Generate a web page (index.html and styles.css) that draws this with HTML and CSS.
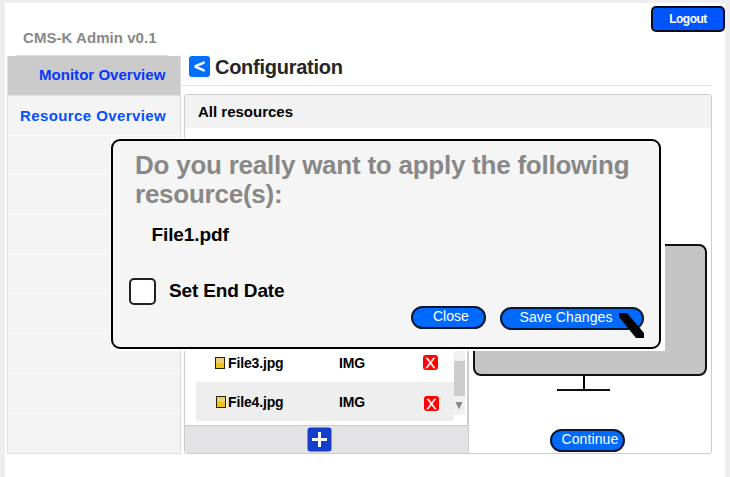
FILE: index.html
```
<!DOCTYPE html>
<html lang="en">
<head>
<meta charset="utf-8">
<title>CMS-K Admin</title>
<link rel="stylesheet" href="styles.css">
</head>
<body>
<div class="app">
  <aside class="sidebar">
    <div class="brand"><span>CMS-K Admin v0.1</span></div>
    <nav class="menu">
      <a class="item active"><span class="monitor-label">Monitor Overview</span></a>
      <a class="item"><span class="resource-label">Resource Overview</span></a>
      <div class="item"></div>
      <div class="item"></div>
      <div class="item"></div>
      <div class="item"></div>
      <div class="item"></div>
      <div class="item"></div>
      <div class="item"></div>
      <div class="item"></div>
    </nav>
  </aside>
  <main class="main">
    <header class="top"><button class="logout">Logout</button></header>
    <div class="heading">
      <svg class="back" viewBox="0 0 21 21"><rect width="21" height="21" rx="3" fill="#006fff"/><path d="M15.6 5v2.8L8.8 10.5l6.8 2.7V16L5.5 11.7V9.3z" fill="#fff"/></svg>
      <h1>Configuration</h1>
    </div>
    <section class="panel">
      <div class="panel-head"><span>All resources</span></div>
      <div class="panel-body">
        <div class="list">
          <div class="list-scroll">
            <div class="rows">
              <div class="row">
                <i class="file-icon"></i><span class="name">File3.jpg</span><span class="type">IMG</span><span class="delete">X</span>
              </div>
              <div class="row alt">
                <i class="file-icon"></i><span class="name">File4.jpg</span><span class="type">IMG</span><span class="delete">X</span>
              </div>
            </div>
            <div class="scrollbar">
              <div class="thumb"></div>
              <svg class="arrow" viewBox="0 0 10 9"><path d="M1.5 1h7L5 8.5z" fill="#888"/></svg>
            </div>
          </div>
          <div class="list-foot">
            <svg class="add" viewBox="0 0 25 25"><rect x=".5" y=".5" width="24" height="24" rx="3" fill="#123fca"/><path d="M12.5 5v15M5 12.5h15" stroke="#fff" stroke-width="3"/></svg>
          </div>
        </div>
        <div class="preview">
          <div class="screen"></div>
          <div class="stand"></div>
          <div class="base"></div>
          <button class="pill continue">Continue</button>
        </div>
      </div>
    </section>
  </main>
</div>
<div class="modal-frame">
  <div class="modal">
    <h2>Do you really want to apply the following<br><span>resource(s):</span></h2>
    <p class="resource"><span>File1.pdf</span></p>
    <label class="end-date"><i class="checkbox"></i><span>Set End Date</span></label>
    <div class="actions">
      <button class="pill close">Close</button>
      <button class="pill save">Save Changes</button>
    </div>
  </div>
</div>
<svg class="cursor" viewBox="0 0 25 25"><path d="M0 0h8l17 20v5h-8L0 4z"/></svg>
</body>
</html>
```
FILE: styles.css
```
* { box-sizing: border-box; }
body {
  margin: 0;
  height: 477px;
  overflow: hidden;
  padding: 3px 5px 0;
  background: #eee;
  font-family: "Liberation Sans", Arial, sans-serif;
  white-space: nowrap;
}
h1, h2, p { margin: 0; }
button { font-family: inherit; margin: 0; padding: 0; }
.app { display: flex; height: 474px; background: #fff; padding-left: 2px; }
.sidebar { width: 174px; flex: none; }
.brand {
  height: 53px;
  margin: 0 13px 0 9px;
  padding: 26px 0 0 7px;
  border-bottom: 1px solid #ddd;
  color: #888;
  font-size: 15px;
  line-height: 18px;
  font-weight: bold;
  letter-spacing: .05px;
}
.menu {
  height: 398px;
  display: grid;
  grid-template-rows: 40px repeat(8, 39.7px) 1fr;
  border: 1px solid #ddd;
  border-top: 0;
  background: #f4f4f4;
}
.item {
  border-bottom: 1px solid #fbfbfb;
  font-size: 15px;
  font-weight: bold;
  line-height: 38px;
  color: #0550ff;
}
.item:last-child { border: 0; }
.item.active { background: #cbcbcb; color: #0537ff; padding-left: 31px; border-color: #e3e3e3; }
.item + .item { padding: 1px 0 0 12px; }
.monitor-label { letter-spacing: .03px; }
.resource-label { letter-spacing: .4px; }
.main { width: 544px; flex: none; }
.top { height: 52px; padding-top: 3px; display: flex; justify-content: flex-end; }
.logout {
  width: 74px;
  height: 26px;
  border: 2px solid #080e20;
  border-radius: 5px;
  background: #0055ff;
  color: #fff;
  font-size: 12px;
  font-weight: bold;
  letter-spacing: -.5px;
}
.heading {
  display: flex;
  width: 531px;
  height: 31px;
  border-bottom: 1px solid #e3e3e3;
  padding-left: 8px;
}
.back { width: 21px; height: 21px; margin-top: 1px; }
.heading h1 { margin-left: 5px; font-size: 20px; line-height: 24px; color: #262626; letter-spacing: -.27px; }
.panel {
  width: 528px;
  height: 360px;
  margin: 8px 0 0 2.5px;
  border: 1px solid #ccc;
  border-radius: 3px;
}
.panel-head {
  height: 33px;
  background: #f2f2f2;
  padding-left: 13.5px;
  font-size: 15px;
  line-height: 34px;
  font-weight: bold;
}
.panel-body { display: flex; height: 325px; }
.list { width: 284px; display: flex; flex-direction: column; }
.list-scroll { height: 282px; margin-top: 15px; display: flex; align-items: flex-end; border-right: 2px solid #ccc; padding-left: 11px; }
.rows { width: 258px; padding-bottom: 4px; }
.row {
  height: 39px;
  display: grid;
  grid-template-columns: 13.5px 111px 84px 17px;
  align-items: center;
  padding-left: 19px;
  font-size: 14px;
  font-weight: bold;
  letter-spacing: -.15px;
}
.row.alt { background: #eee; }
.file-icon {
  width: 10px;
  height: 12px;
  border: 1.5px solid #252008;
  background: linear-gradient(#e8cf78 0 45%, #efc31b 50%);
}
.alt .file-icon { margin-left: 1px; }
.delete {
  width: 15px;
  height: 15px;
  border-radius: 3px;
  background: #f00;
  color: #fff;
  font-size: 15px;
  line-height: 15px;
  text-align: center;
  font-weight: normal;
  -webkit-text-stroke: .3px #fff;
}
.row:not(.alt) .delete { margin-top: -1px; }
.row.alt .delete { margin: 4px 0 0 1px; }
.scrollbar { width: 11px; height: 272px; margin-bottom: 10px; background: #f1f1f1; display: flex; flex-direction: column; justify-content: flex-end; }
.thumb { height: 35px; background: #cdcdcd; }
.arrow { width: 10px; height: 9px; margin: 5px 0; }
.list-foot { height: 28px; background: #e3e3e5; border-top: 1px solid #ccc; border-right: 1px solid #ccc; padding: 1px 0 0 122px; }
.add { width: 25px; height: 25px; display: block; }
.preview { width: 242px; display: flex; flex-direction: column; align-items: flex-start; padding: 116px 0 0 4px; }
.screen { width: 234px; height: 132px; border: 2px solid #111; border-radius: 8px; background: #c5c5c5; }
.stand { width: 2px; height: 13px; margin-left: 110px; background: #000; }
.base { width: 53px; height: 2px; margin-left: 84px; background: #111; }
.pill {
  border: 2px solid #081630;
  border-radius: 12px;
  background: #006aff;
  color: #fff;
  font-size: 14px;
  line-height: 16px;
  height: 23px;
  text-align: left;
  flex: none;
}
.continue { width: 75px; margin: 38px 0 0 77px; padding: 0 0 3px 10px; letter-spacing: .1px; }
.modal-frame {
  position: absolute;
  left: 111px;
  top: 138px;
  width: 554px;
  height: 213px;
  background: #fff;
  padding-top: 1px;
}
.modal {
  width: 550px;
  height: 210px;
  border: 2px solid #000;
  border-radius: 9px;
  background: #f5f5f5;
}
.modal h2 { padding: 10px 0 0 22px; font-size: 26px; line-height: 29px; color: #888; letter-spacing: -.24px; }
.resource { padding: 13px 0 0 38.5px; font-size: 19px; line-height: 25px; font-weight: bold; letter-spacing: -.1px; }
.end-date { display: flex; align-items: center; height: 27px; margin: 31px 0 0 16px; font-size: 19px; font-weight: bold; letter-spacing: -.15px; }
.checkbox { width: 27px; height: 27px; border: 2px solid #222; border-radius: 5px; background: #fff; margin-right: 13px; }
.end-date span { margin-top: -2px; }
.actions { display: flex; align-items: flex-start; gap: 14px; margin: 1px 0 0 298px; }
.close { width: 75px; padding: 0 0 3px 20px; }
.save { width: 144px; margin-top: 1px; padding: 0 0 4px 17.5px; letter-spacing: .1px; }
.cursor { position: absolute; left: 619px; top: 313px; width: 25px; height: 25px; }
```
